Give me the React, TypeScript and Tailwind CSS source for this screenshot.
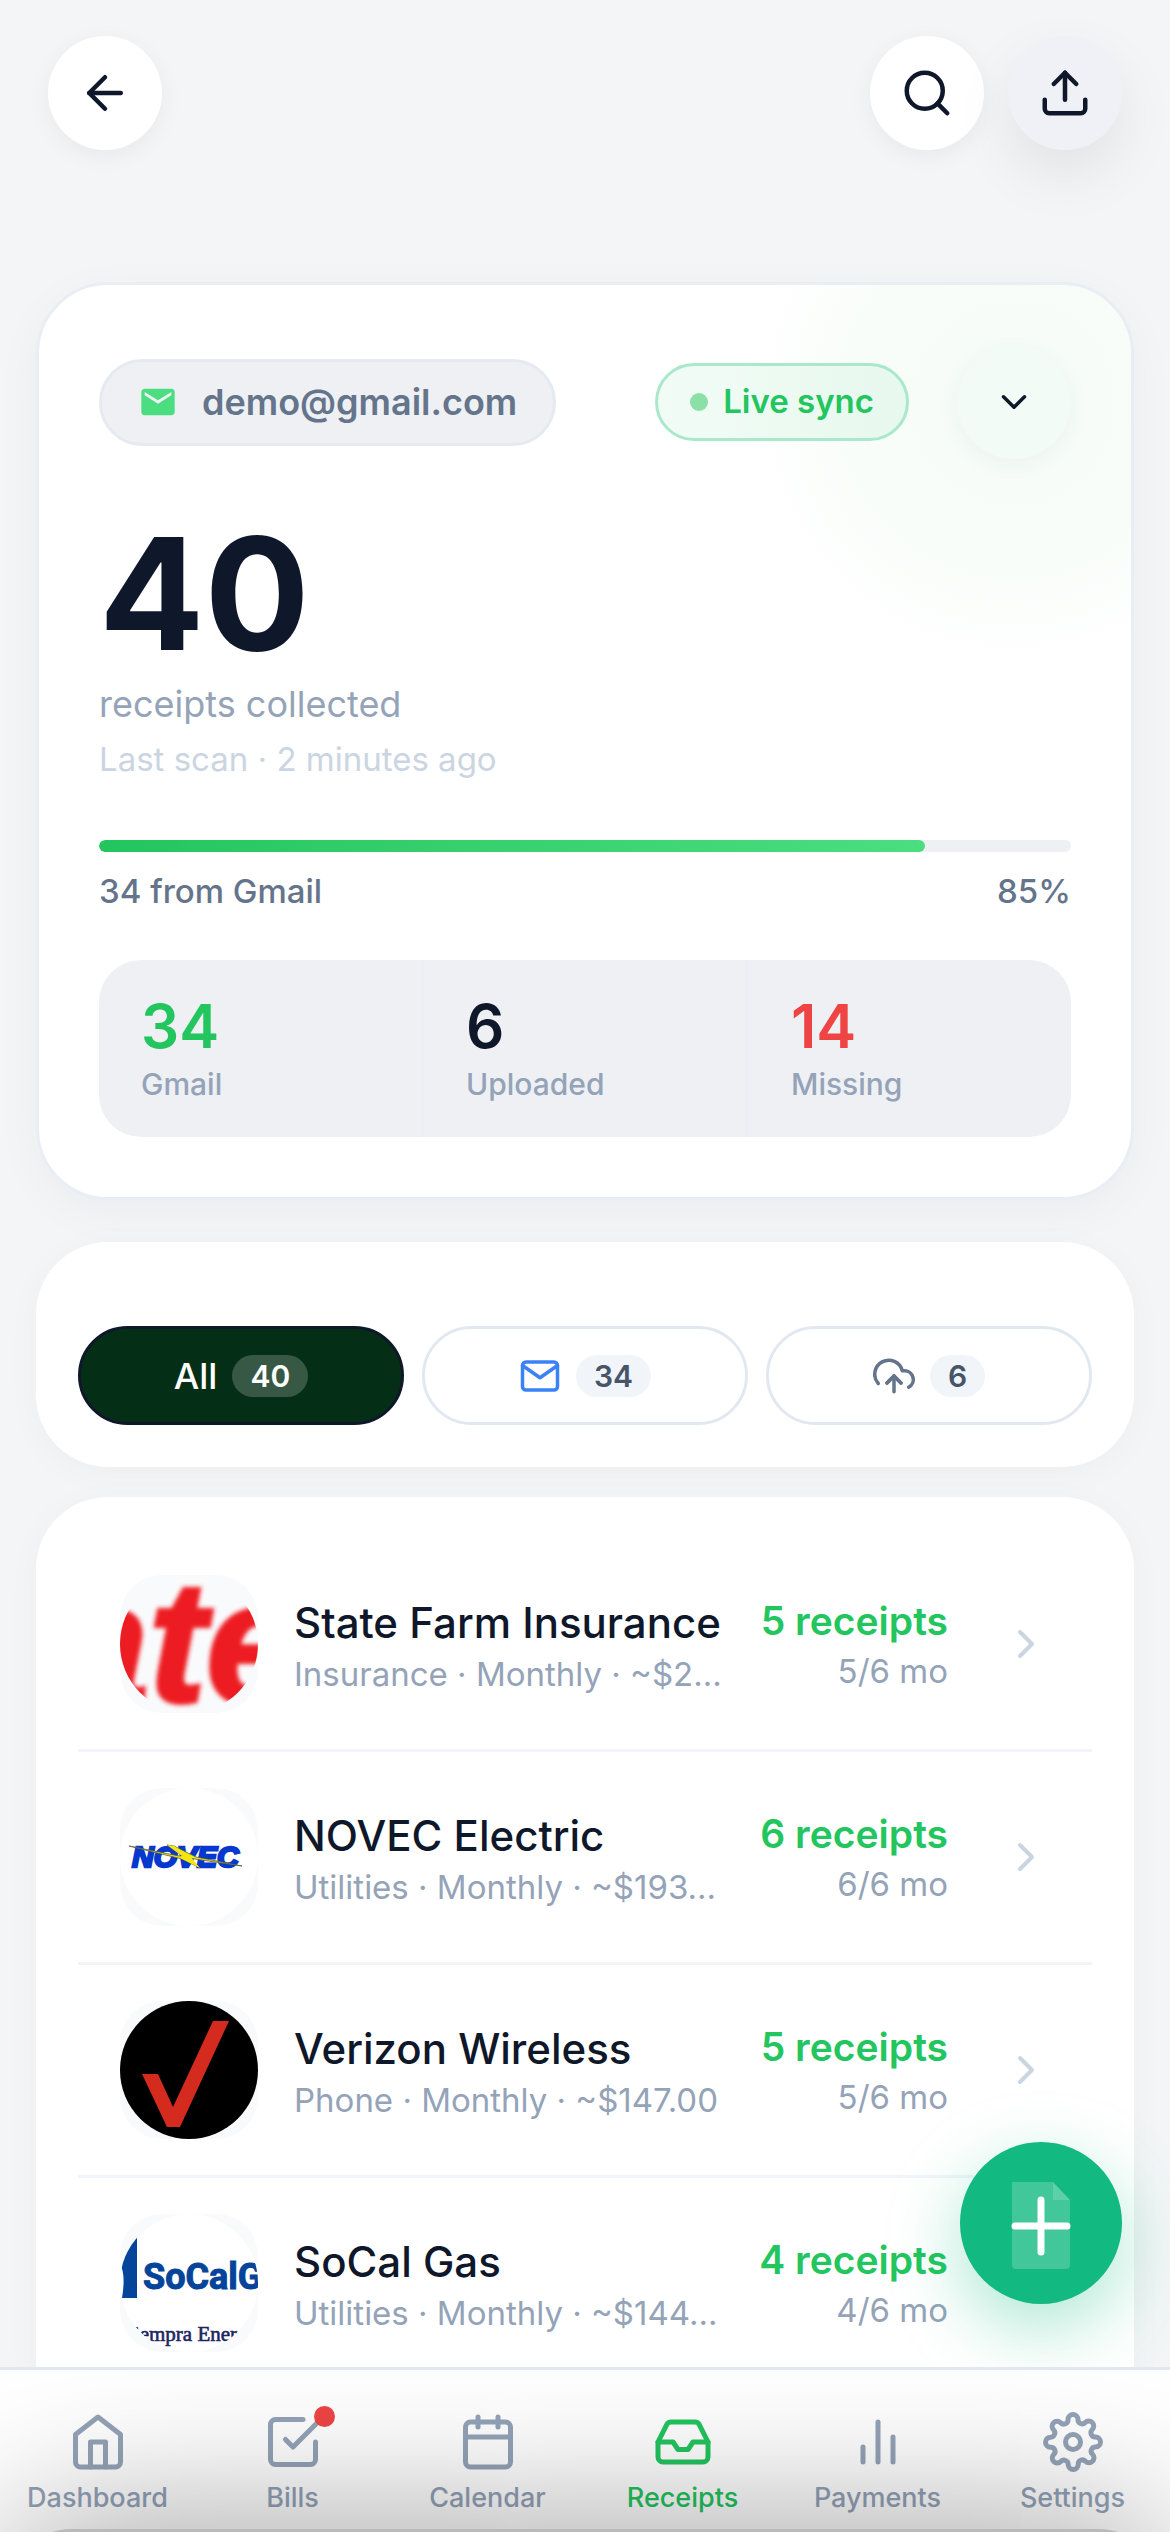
import type { ReactNode } from "react";
import {
  FiArrowLeft,
  FiBarChart2,
  FiCalendar,
  FiCheckSquare,
  FiChevronDown,
  FiChevronRight,
  FiHome,
  FiInbox,
  FiMail,
  FiSearch,
  FiSettings,
  FiUpload,
  FiUploadCloud,
} from "react-icons/fi";
import { MdEmail } from "react-icons/md";

interface Biller {
  name: string;
  detail: string;
  receipts: string;
  months: string;
  logo: ReactNode;
}

const StateFarmLogo = () => (
  <svg viewBox="0 0 138 138" className="size-full rounded-full" aria-hidden="true">
    <rect width="138" height="138" fill="#f9fafc" />
    <defs>
      <filter id="soft">
        <feGaussianBlur stdDeviation="2" />
      </filter>
    </defs>
    <text
      x="-67"
      y="127"
      fontFamily="Liberation Sans, sans-serif"
      fontSize="172"
      fontWeight="bold"
      fontStyle="italic"
      fill="#ed1c24"
      stroke="#ed1c24"
      strokeWidth="4"
      filter="url(#soft)"
    >
      ate
    </text>
  </svg>
);

const NovecLogo = () => (
  <svg viewBox="0 0 138 138" className="size-full rounded-full" aria-hidden="true">
    <rect width="138" height="138" fill="#fff" />
    <text
      x="12"
      y="79"
      fontFamily="Liberation Sans, sans-serif"
      fontSize="30"
      fontWeight="bold"
      fontStyle="italic"
      fill="#0637cf"
      stroke="#0637cf"
      strokeWidth="2.5"
    >
      NOVEC
    </text>
    <path
      d="M9 58L64 69L47 57L54 58L76 69L122 78L68 70L80 80L62 71Z"
      fill="#f5e513"
      stroke="#59633a"
      strokeWidth="0.8"
    />
    <path d="M47 57L54 58L70 68L80 80L58 69L62 68Z" fill="#f5e513" />
  </svg>
);

const VerizonLogo = () => (
  <svg viewBox="0 0 138 138" className="size-full rounded-full" aria-hidden="true">
    <rect width="138" height="138" fill="#000" />
    <path d="M22 73H38L53 106L93 20H109L60 126H47Z" fill="#d52b1e" />
  </svg>
);

const SoCalLogo = () => (
  <svg viewBox="0 0 138 138" className="size-full rounded-full" aria-hidden="true">
    <rect width="138" height="138" fill="#fff" />
    <path d="M17 20V84H2Q6 60 0 50Z" fill="#04449a" />
    <text
      x="23"
      y="75"
      fontFamily="Roboto, sans-serif"
      fontSize="36"
      fontWeight="bold"
      fill="#04449a"
      stroke="#04449a"
      strokeWidth="1"
    >
      SoCalG
    </text>
    <text
      x="8"
      y="127"
      fontFamily="Liberation Serif, serif"
      fontSize="21"
      fill="#1d2560"
      stroke="#1d2560"
      strokeWidth="0.6"
    >
      Sempra Ener
    </text>
  </svg>
);

const billers: Biller[] = [
  {
    name: "State Farm Insurance",
    detail: "Insurance · Monthly · ~$2…",
    receipts: "5 receipts",
    months: "5/6 mo",
    logo: <StateFarmLogo />,
  },
  {
    name: "NOVEC Electric",
    detail: "Utilities · Monthly · ~$193…",
    receipts: "6 receipts",
    months: "6/6 mo",
    logo: <NovecLogo />,
  },
  {
    name: "Verizon Wireless",
    detail: "Phone · Monthly · ~$147.00",
    receipts: "5 receipts",
    months: "5/6 mo",
    logo: <VerizonLogo />,
  },
  {
    name: "SoCal Gas",
    detail: "Utilities · Monthly · ~$144…",
    receipts: "4 receipts",
    months: "4/6 mo",
    logo: <SoCalLogo />,
  },
];

const stats = [
  { value: 34, label: "Gmail", color: "text-[#22c55e]" },
  { value: 6, label: "Uploaded", color: "text-[#0f172a]" },
  { value: 14, label: "Missing", color: "text-[#ef4444]" },
];

const tabs = [
  { label: "Dashboard", icon: FiHome },
  { label: "Bills", icon: FiCheckSquare, badge: true },
  { label: "Calendar", icon: FiCalendar },
  { label: "Receipts", icon: FiInbox, active: true },
  { label: "Payments", icon: FiBarChart2 },
  { label: "Settings", icon: FiSettings },
];

const Header = () => (
  <header className="flex items-center gap-6 px-12 pt-9">
    <button
      aria-label="Back"
      className="mr-auto flex size-[114px] items-center justify-center rounded-full bg-white shadow-[0_6px_24px_rgba(0,0,0,0.05)]"
    >
      <FiArrowLeft size={54} />
    </button>
    <button
      aria-label="Search"
      className="flex size-[114px] items-center justify-center rounded-full bg-white shadow-[0_6px_24px_rgba(0,0,0,0.05)]"
    >
      <FiSearch size={54} />
    </button>
    <button
      aria-label="Upload"
      className="flex size-[114px] items-center justify-center rounded-full bg-[#f0f1f6] shadow-[0_24px_60px_rgba(0,0,0,0.08)]"
    >
      <FiUpload size={54} />
    </button>
  </header>
);

const SummaryCard = () => (
  <section className="rounded-[72px] border-3 border-[#e9eef4] bg-white bg-[radial-gradient(circle_at_right_117px_top_117px,#f4fbf6_0px,#f9fdfa_170px,#ffffff_265px)] p-15 shadow-[0_12px_48px_rgba(15,23,42,0.04)]">
    <div className="flex items-center">
      <div className="mr-auto flex h-[87px] items-center gap-6 rounded-full border-3 border-[#e5eaf1] bg-[#eef0f4] px-9 text-4xl font-semibold text-[#64748b]">
        <MdEmail size={40} className="text-[#4ade80]" />
        demo@gmail.com
      </div>
      <div className="flex h-[78px] items-center gap-[15px] rounded-full border-3 border-[#a9e8cc] bg-linear-to-r from-[#f2fcf6] to-[#e7f8ee] px-8 text-[33px] font-semibold text-[#22c55e]">
        <span className="size-[18px] rounded-full bg-[#8be0a8]" />
        Live sync
      </div>
      <button
        aria-label="Show accounts"
        className="ml-12 flex size-[114px] items-center justify-center rounded-full bg-[#f3fbf6] shadow-[0_6px_24px_rgba(0,0,0,0.04)]"
      >
        <FiChevronDown size={42} />
      </button>
    </div>

    <h1 className="mt-[57px] text-[156px] leading-[156px] font-bold">40</h1>
    <p className="mt-2.5 text-4xl leading-[44px] text-[#94a3b8]">receipts collected</p>
    <p className="mt-3 text-[33px] leading-[42px] text-[#cbd5e1]">Last scan · 2 minutes ago</p>

    <div
      role="progressbar"
      aria-label="Receipts from Gmail"
      aria-valuenow={85}
      className="mt-15 h-3 overflow-hidden rounded-full bg-[#eef0f4]"
    >
      <div className="h-full w-[85%] rounded-full bg-linear-to-r from-[#22c55e] to-[#4ade80]" />
    </div>
    <div className="mt-[18px] flex justify-between text-[33px] leading-[42px] font-medium text-[#64748b]">
      <span>34 from Gmail</span>
      <span>85%</span>
    </div>

    <dl className="mt-12 flex overflow-hidden rounded-[42px] bg-[#eef0f4]">
      {stats.map((stat) => (
        <div
          key={stat.label}
          className="flex flex-1 flex-col-reverse gap-[3px] border-r-3 border-[#eceef3] px-[42px] pt-[30px] pb-[33px] last:border-r-0"
        >
          <dt className="text-3xl leading-[39px] font-medium text-[#94a3b8]">{stat.label}</dt>
          <dd className={`text-6xl leading-[72px] font-semibold ${stat.color}`}>{stat.value}</dd>
        </div>
      ))}
    </dl>
  </section>
);

const Filters = () => (
  <section className="mt-[42px] rounded-[72px] bg-white px-[42px] pt-[84px] pb-[42px] shadow-[0_6px_36px_rgba(15,23,42,0.03)]">
    <div className="flex gap-[18px] text-4xl font-medium">
      <button className="flex h-[99px] flex-1 items-center justify-center gap-[15px] rounded-full border-3 border-[#0f172a] bg-[#052e16] text-white">
        All
        <span className="rounded-full bg-[#375845] px-[18px] text-3xl leading-[42px] font-semibold">40</span>
      </button>
      <button
        aria-label="Gmail 34"
        className="flex h-[99px] flex-1 items-center justify-center gap-[15px] rounded-full border-3 border-[#e2e8f0]"
      >
        <FiMail size={42} className="text-[#3b82f6]" />
        <span className="rounded-full bg-[#f1f5f9] px-[18px] text-3xl leading-[42px] font-semibold text-[#475569]">34</span>
      </button>
      <button
        aria-label="Uploaded 6"
        className="flex h-[99px] flex-1 items-center justify-center gap-[15px] rounded-full border-3 border-[#e2e8f0]"
      >
        <FiUploadCloud size={42} className="text-[#64748b]" />
        <span className="rounded-full bg-[#f1f5f9] px-[18px] text-3xl leading-[42px] font-semibold text-[#475569]">6</span>
      </button>
    </div>
  </section>
);

const BillerRow = ({ biller }: { biller: Biller }) => (
  <li className="border-b-3 border-[#f1f5f9]">
    <a href="#" className="flex items-center px-[42px] py-9">
      <div className="size-[138px] shrink-0 overflow-hidden rounded-[42px] bg-[#f8fafc]">{biller.logo}</div>
      <div className="ml-9 min-w-0 flex-1">
        <p className="truncate text-[42px] leading-[60px] font-medium">{biller.name}</p>
        <p className="truncate text-[33px] leading-[42px] text-[#94a3b8]">{biller.detail}</p>
      </div>
      <div className="ml-9 text-right">
        <p className="text-[39px] leading-[54px] font-semibold text-[#22c55e]">{biller.receipts}</p>
        <p className="text-[33px] leading-[46px] text-[#94a3b8]">{biller.months}</p>
      </div>
      <FiChevronRight size={48} className="ml-[54px] text-[#cbd5e1]" />
    </a>
  </li>
);

const AddButton = () => (
  <button
    aria-label="Add receipt"
    className="fixed right-12 bottom-[228px] flex size-[162px] items-center justify-center rounded-full bg-[#12b981] pt-1.5 shadow-[0_24px_72px_rgba(16,185,129,0.35)]"
  >
    <svg width="60" height="88" viewBox="0 0 60 88" fill="none">
      <path d="M1 0H42L59 18V83Q59 87 55 87H5Q1 87 1 83Z" fill="#fff" fillOpacity="0.2" />
      <path d="M42 0L59 18H42Z" fill="#fff" fillOpacity="0.15" />
      <path d="M30 18V70M4 44H56" stroke="#fff" strokeWidth="7" strokeLinecap="round" />
    </svg>
  </button>
);

const TabBar = () => (
  <nav className="fixed inset-x-0 bottom-0 overflow-hidden border-t-3 border-[#e2e8f0] bg-white">
    <div className="flex h-[162px] pt-[42px]">
      {tabs.map((tab) => (
        <a
          key={tab.label}
          href="#"
          className={`flex flex-1 flex-col items-center gap-2 text-[27px] leading-[36px] font-medium ${
            tab.active ? "text-[#22c55e]" : "text-[#94a3b8]"
          }`}
        >
          <span className="relative">
            <tab.icon size={60} />
            {tab.badge && <span className="absolute -top-1.5 -right-3 size-[21px] rounded-full bg-[#ef4444]" />}
          </span>
          {tab.label}
        </a>
      ))}
    </div>
    {/* top edge of the sheet parked under the bar */}
    <div className="pointer-events-none absolute inset-x-0 top-[159px] h-[400px] rounded-[72px] bg-[#b9b9b9] shadow-[0_0_160px_rgba(0,0,0,0.42)]" />
  </nav>
);

const App: React.FC = () => {
  return (
    <div className="h-screen overflow-hidden bg-[#f3f5f7] font-['Inter',sans-serif] text-[#0f172a]">
      <Header />
      <main className="px-9 pt-[132px]">
        <SummaryCard />
        <Filters />
        <section className="mt-[30px] rounded-[72px] bg-white p-[42px] shadow-[0_6px_36px_rgba(15,23,42,0.03)]">
          <ul>
            {billers.map((biller) => (
              <BillerRow key={biller.name} biller={biller} />
            ))}
          </ul>
        </section>
      </main>
      <AddButton />
      <TabBar />
    </div>
  );
};

export default App;
